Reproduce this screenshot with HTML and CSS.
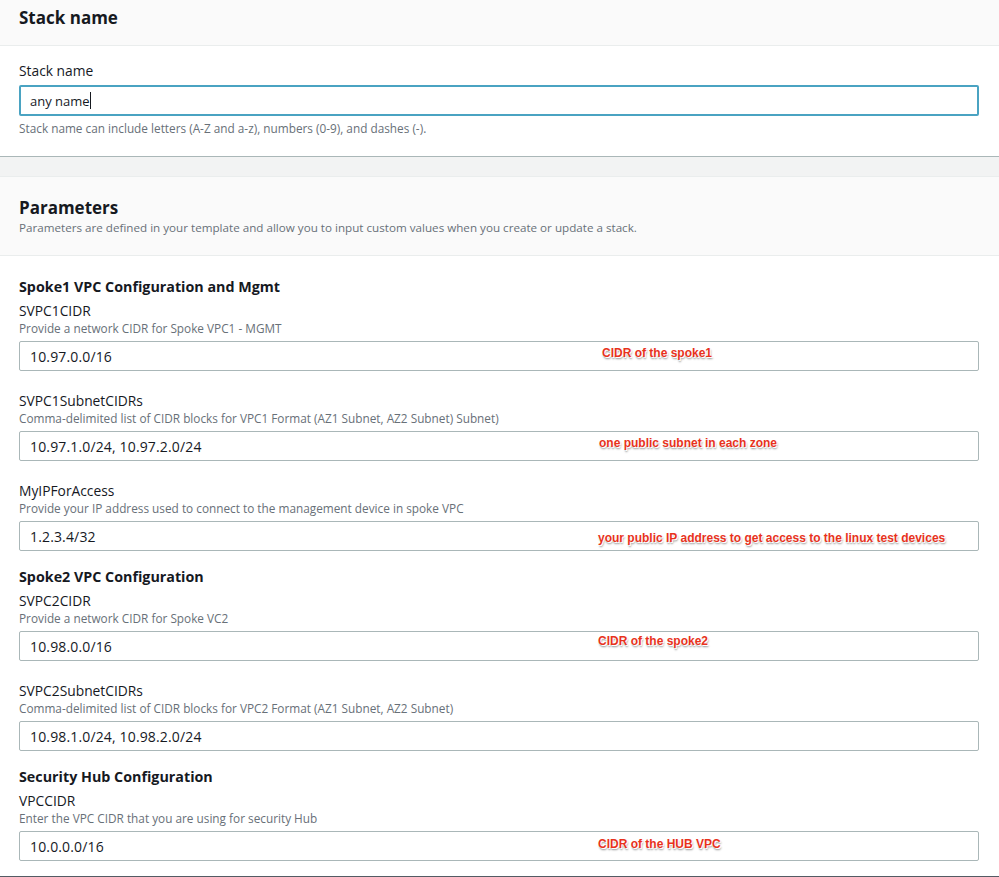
FILE: index.html
```html
<!DOCTYPE html>
<html lang="en">
<head>
<meta charset="utf-8">
<title>Create stack - Specify stack details</title>
<link rel="stylesheet" href="styles.css">
</head>
<body>
<main class="page">
  <section class="card card-stack">
    <header class="card-header card-header-short">
      <h2 class="card-title">Stack name</h2>
    </header>
    <div class="card-body card-body-stack">
      <div class="field">
        <div class="field-label">Stack name</div>
        <div class="input input-focus"><span class="input-text">any name</span><span class="caret"></span></div>
        <div class="field-hint">Stack name can include letters (A-Z and a-z), numbers (0-9), and dashes (-).</div>
      </div>
    </div>
  </section>

  <div class="spacer"></div>

  <section class="card card-params">
    <header class="card-header card-header-tall">
      <h2 class="card-title">Parameters</h2>
      <p class="card-desc">Parameters are defined in your template and allow you to input custom values when you create or update a stack.</p>
    </header>
    <div class="card-body card-body-params">
      <div class="group">
        <h3 class="group-title">Spoke1 VPC Configuration and Mgmt</h3>
        <div class="field">
          <div class="field-label">SVPC1CIDR</div>
          <div class="field-desc">Provide a network CIDR for Spoke VPC1 - MGMT</div>
          <div class="input"><span class="input-text">10.97.0.0/16</span><span class="note note-1">CIDR of the spoke1</span></div>
        </div>
        <div class="field">
          <div class="field-label">SVPC1SubnetCIDRs</div>
          <div class="field-desc">Comma-delimited list of CIDR blocks for VPC1 Format (AZ1 Subnet, AZ2 Subnet) Subnet)</div>
          <div class="input"><span class="input-text">10.97.1.0/24, 10.97.2.0/24</span><span class="note note-2">one public subnet in each zone</span></div>
        </div>
        <div class="field">
          <div class="field-label">MyIPForAccess</div>
          <div class="field-desc">Provide your IP address used to connect to the management device in spoke VPC</div>
          <div class="input"><span class="input-text">1.2.3.4/32</span><span class="note note-3">your public IP address to get access to the linux test devices</span></div>
        </div>
      </div>

      <div class="group">
        <h3 class="group-title">Spoke2 VPC Configuration</h3>
        <div class="field">
          <div class="field-label">SVPC2CIDR</div>
          <div class="field-desc">Provide a network CIDR for Spoke VC2</div>
          <div class="input"><span class="input-text">10.98.0.0/16</span><span class="note note-4">CIDR of the spoke2</span></div>
        </div>
        <div class="field">
          <div class="field-label">SVPC2SubnetCIDRs</div>
          <div class="field-desc">Comma-delimited list of CIDR blocks for VPC2 Format (AZ1 Subnet, AZ2 Subnet)</div>
          <div class="input"><span class="input-text">10.98.1.0/24, 10.98.2.0/24</span></div>
        </div>
      </div>

      <div class="group">
        <h3 class="group-title">Security Hub Configuration</h3>
        <div class="field">
          <div class="field-label">VPCCIDR</div>
          <div class="field-desc">Enter the VPC CIDR that you are using for security Hub</div>
          <div class="input"><span class="input-text">10.0.0.0/16</span><span class="note note-5">CIDR of the HUB VPC</span></div>
        </div>
      </div>
    </div>
  </section>
</main>
</body>
</html>
```

FILE: styles.css
```css
* {
  box-sizing: border-box;
}

html, body {
  margin: 0;
  padding: 0;
}

body {
  background: #f2f3f3;
  font-family: "Open Sans", "Noto Sans", "Liberation Sans", sans-serif;
  color: #16191f;
  width: 999px;
  height: 877px;
  overflow: hidden;
}

.page {
  display: flex;
  flex-direction: column;
}

.card {
  background: #ffffff;
}

.card-stack {
  border-bottom: 1px solid #aab7b8;
  box-shadow: 0 1px 1px rgba(0, 28, 36, 0.15);
}

.card-params {
  border-top: 1px solid #eaeded;
  border-bottom: 1px solid #545b64;
}

.spacer {
  height: 19px;
  background: #f2f3f3;
}

.card-header {
  background: #fafafa;
  border-bottom: 1px solid #eaeded;
  padding: 0 19px;
}

.card-header-short {
  height: 46px;
  padding-top: 7px;
}

.card-header-tall {
  height: 79px;
  padding-top: 20px;
}

.card-title {
  margin: 0;
  font-size: 17px;
  line-height: 22px;
  font-weight: 700;
}

.card-desc {
  margin: 1px 0 0;
  font-size: 11.65px;
  line-height: 16px;
  color: #687078;
}

.card-body {
  padding: 0 20px 0 19px;
}

.card-body-stack {
  padding-top: 16px;
  height: 110px;
}

.card-body-params {
  padding-top: 20px;
  height: 620px;
  display: flex;
  flex-direction: column;
  gap: 15px;
}

.group {
  display: flex;
  flex-direction: column;
  gap: 21px;
}

.group-title {
  margin: 0 0 -17px;
  font-size: 14.3px;
  line-height: 22px;
  font-weight: 700;
}

.field {
  display: flex;
  flex-direction: column;
}

.field-label {
  font-size: 13.8px;
  line-height: 18px;
}

.field-desc {
  font-size: 11.8px;
  line-height: 16px;
  color: #687078;
}

.field-hint {
  margin-top: 4px;
  font-size: 11.8px;
  line-height: 16px;
  color: #687078;
}

.input {
  position: relative;
  display: flex;
  align-items: center;
  height: 30px;
  margin-top: 5px;
  padding: 0 10px;
  border: 1px solid #aab7b8;
  border-radius: 2px;
  background: #ffffff;
  font-size: 14px;
  letter-spacing: 0.15px;
}

.input-focus {
  height: 31px;
  margin-top: 5px;
  border: 2px solid #4aa3c2;
  padding: 0 9px;
  font-size: 13px;
  letter-spacing: 0;
}

.input-text {
  color: #16191f;
}

.caret {
  display: inline-block;
  width: 1px;
  height: 17px;
  background: #16191f;
}

.note {
  position: absolute;
  font-family: "Liberation Sans", Arial, sans-serif;
  font-weight: 700;
  font-size: 12px;
  line-height: 14px;
  letter-spacing: 0;
  color: #e8321c;
  text-shadow:
    0 0 1px #ffffff,
    1px 1px 0 #ffffff,
    -1px -1px 0 #ffffff,
    1px 2px 2px rgba(0, 0, 0, 0.45);
  white-space: nowrap;
}

.note-1 { left: 582px; top: 4px; }
.note-2 { left: 579px; top: 4px; }
.note-3 { left: 578px; top: 9px; }
.note-4 { left: 578px; top: 2px; }
.note-5 { left: 578px; top: 5px; }
```
